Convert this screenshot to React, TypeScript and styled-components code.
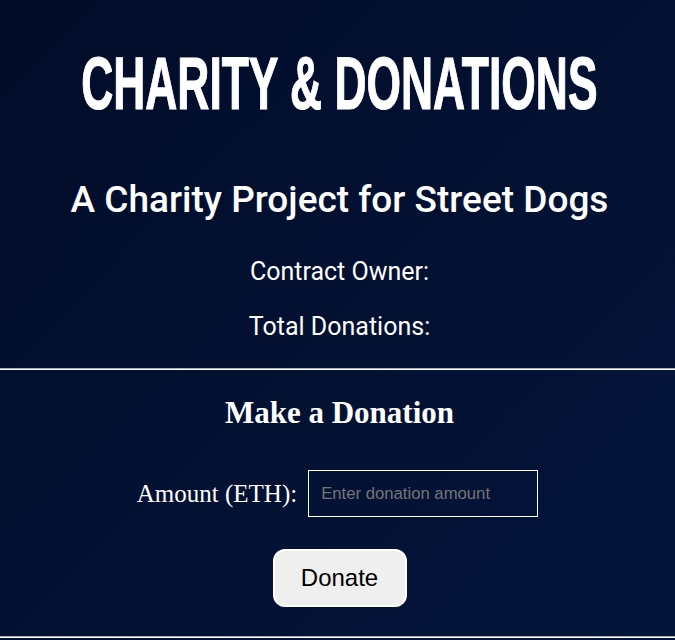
import React from "react";
import styled, { createGlobalStyle } from "styled-components";

const Global = createGlobalStyle`
  html, body {
    margin: 0;
    padding: 0;
  }
  body {
    min-height: 640px;
    background: linear-gradient(135deg, #020c29 0%, #04153b 100%);
    color: #ffffff;
  }
`;

const Page = styled.main`
  display: flex;
  flex-direction: column;
  align-items: center;
  text-align: center;
  padding-top: 47px;
`;

const Title = styled.h1`
  margin: 0 0 0 4px;
  font-family: "Liberation Sans", Arial, sans-serif;
  font-weight: 700;
  font-size: 74px;
  line-height: 74px;
  white-space: nowrap;
  transform: scaleX(0.6);
  -webkit-text-stroke: 1.2px #ffffff;
`;

const Subtitle = styled.h2`
  margin: 58px 0 0 4px;
  font-family: Roboto, "Noto Sans", sans-serif;
  font-weight: 500;
  font-size: 37px;
  line-height: 42px;
`;

const Info = styled.p<{ $gap: number }>`
  margin: ${(p) => p.$gap}px 0 0;
  font-family: Roboto, "Noto Sans", sans-serif;
  font-weight: 400;
  font-size: 25px;
  line-height: 28px;
`;

const Rule = styled.hr`
  align-self: stretch;
  margin: 0;
  height: 0;
  border: none;
  border-top: 1px solid #a9adb8;
  border-bottom: 1px solid #ffffff;
`;

const DonateSection = styled.section`
  align-self: stretch;
  display: flex;
  flex-direction: column;
  align-items: center;
  padding: 25px 0 29px 4px;
`;

const SectionTitle = styled.h3`
  margin: 0 0 39px;
  font-family: "Liberation Serif", "Times New Roman", serif;
  font-weight: 700;
  font-size: 31px;
  line-height: 36px;
`;

const FieldRow = styled.div`
  display: flex;
  align-items: center;
  gap: 11px;
  margin: 0 4px 32px 0;
`;

const Label = styled.label`
  font-family: "Liberation Serif", "Times New Roman", serif;
  font-size: 25px;
`;

const Input = styled.input`
  box-sizing: border-box;
  width: 230px;
  height: 47px;
  padding: 0 12px;
  background: transparent;
  border: 1px solid #ffffff;
  border-radius: 0;
  color: #ffffff;
  font-family: "Liberation Sans", Arial, sans-serif;
  font-size: 16.7px;
  outline: none;
  &::placeholder {
    color: #757575;
  }
`;

const Button = styled.button`
  box-sizing: border-box;
  width: 134px;
  height: 58px;
  background: #efefef;
  border: 2px solid #ffffff;
  border-radius: 12px;
  color: #000000;
  font-family: "Liberation Sans", Arial, sans-serif;
  font-size: 24px;
  cursor: pointer;
`;

const InfoBlock = styled.div`
  display: flex;
  flex-direction: column;
  align-items: center;
  padding: 0 0 27px 4px;
`;

export default function App() {
  return (
    <>
      <Global />
      <Page>
        <Title>CHARITY &amp; DONATIONS</Title>
        <Subtitle>A Charity Project for Street Dogs</Subtitle>
        <InfoBlock>
          <Info $gap={37}>Contract Owner:</Info>
          <Info $gap={27}>Total Donations:</Info>
        </InfoBlock>
        <Rule />
        <DonateSection>
          <SectionTitle>Make a Donation</SectionTitle>
          <FieldRow>
            <Label htmlFor="amount">Amount (ETH):</Label>
            <Input id="amount" type="number" placeholder="Enter donation amount" />
          </FieldRow>
          <Button>Donate</Button>
        </DonateSection>
        <Rule />
      </Page>
    </>
  );
}
